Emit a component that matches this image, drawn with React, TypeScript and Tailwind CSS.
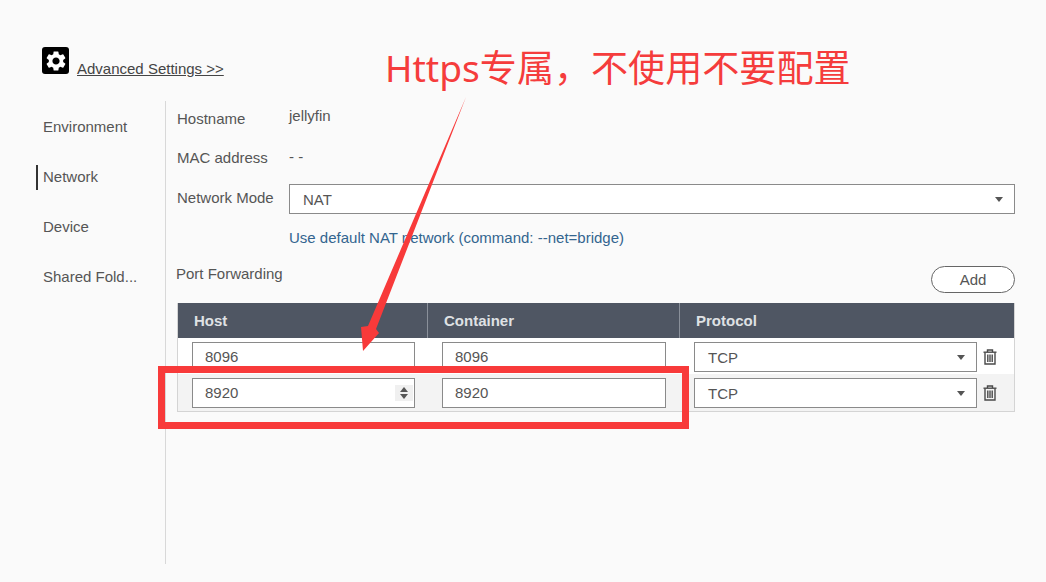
import React from 'react';
import { MdSettings } from 'react-icons/md';

const fontStack = "font-['Liberation_Sans',Arial,sans-serif]";

const Trash = () => (
    <svg width="14" height="16" viewBox="0 0 14 16" fill="none" stroke="#4a4a4a" strokeWidth="1.4" className="shrink-0">
        <path d="M0.5 3.2H13.5" />
        <path d="M4.5 3V1H9.5V3" />
        <path d="M2 3.5V15H12V3.5" />
        <path d="M4.8 5.5V13M7 5.5V13M9.2 5.5V13" />
    </svg>
);

const Caret = () => (
    <svg width="8" height="5" viewBox="0 0 8 5" className="shrink-0">
        <path d="M0 0H8L4 5Z" fill="#555" />
    </svg>
);

const SelectBox = ({ value, className }: { value: string; className: string }) => (
    <div className={`flex items-center justify-between bg-white border border-[#8a8a8a] pl-[13px] pr-[11px] text-[15px] text-[#555] ${className}`}>
        <span className="pt-[2px]">{value}</span>
        <Caret />
    </div>
);

const NumberBox = ({ value, width, spinner }: { value: string; width: string; spinner?: boolean }) => (
    <div className={`flex items-center justify-between h-[30px] bg-white border border-[#8a8a8a] pl-[12px] pr-px text-[15px] text-[#555] ${width}`}>
        <span>{value}</span>
        {spinner && (
            <div className="flex flex-col items-center justify-center gap-[2px] w-[18px] h-[16px] bg-[#f0f0f0]">
                <svg width="8" height="5" viewBox="0 0 8 5"><path d="M0 5H8L4 0Z" fill="#555" /></svg>
                <svg width="8" height="5" viewBox="0 0 8 5"><path d="M0 0H8L4 5Z" fill="#555" /></svg>
            </div>
        )}
    </div>
);

const PortRow = ({ host, container, active }: { host: string; container: string; active?: boolean }) => (
    <div className={`flex items-start pt-[4px] ${active ? 'h-[37px] bg-[#f3f3f3]' : 'h-[36px] bg-white'}`}>
        <div className="w-[250px] pl-[14px]">
            <NumberBox value={host} width="w-[223px]" spinner={active} />
        </div>
        <div className="w-[252px] pl-[14px]">
            <NumberBox value={container} width="w-[224px]" />
        </div>
        <div className="flex items-center flex-1 pl-[14px] gap-[6px]">
            <SelectBox value="TCP" className="w-[283px] h-[30px]" />
            <Trash />
        </div>
    </div>
);

const InfoRow = ({ label, children, className, labelClass = '' }: { label: string; children: React.ReactNode; className: string; labelClass?: string }) => (
    <div className={`flex ${className}`}>
        <div className={`w-[112px] shrink-0 text-[15px] text-[#555] ${labelClass}`}>{label}</div>
        {children}
    </div>
);

export default function App() {
    const nav = ['Environment', 'Network', 'Device', 'Shared Fold...'];
    return (
        <div className={`relative w-[1046px] h-[582px] overflow-hidden bg-[#fafafa] ${fontStack}`}>
            <div className="flex items-start h-[101px] pt-[47px] pl-[42px]">
                <div className="flex items-center justify-center w-[27px] h-[27px] rounded-[3px] bg-black">
                    <MdSettings size={24} color="#fff" />
                </div>
                <a className="ml-[8px] mt-[13px] text-[15px] leading-[18px] text-[#444] underline">Advanced Settings &gt;&gt;</a>
            </div>

            <div className="flex h-[463px]">
                <nav className="w-[165px] shrink-0 pl-[36px] pt-[1px] text-[15px] text-[#555]">
                    {nav.map((item, i) => (
                        <div key={item} className="flex items-center h-[50px] pt-[1px]">
                            <div className={`w-[2px] h-[25px] mr-[5px] ${i === 1 ? 'bg-[#333]' : ''}`} />
                            {item}
                        </div>
                    ))}
                </nav>

                <main className="flex-1 border-l border-[#d8d8d8] pl-[11px] pr-[31px]">
                    <InfoRow label="Hostname" className="h-[40px] pt-[9px] leading-[18px]">
                        <span className="-mt-[3px] text-[15px] text-[#555]">jellyfin</span>
                    </InfoRow>
                    <InfoRow label="MAC address" className="h-[40px] pt-[8px] leading-[18px]">
                        <span className="-mt-px text-[15px] text-[#555]">- -</span>
                    </InfoRow>
                    <InfoRow label="Network Mode" className="h-[34px] pt-[3px] leading-[30px]" labelClass="-mt-[1px]">
                        <SelectBox value="NAT" className="flex-1 h-[30px]" />
                    </InfoRow>
                    <div className="pl-[112px] mt-[14px] text-[15px] leading-[18px] text-[#33658f]">
                        Use default NAT network (command: --net=bridge)
                    </div>
                    <div className="flex items-start justify-between mt-[10px] -ml-px">
                        <span className="mt-[8px] text-[15px] leading-[18px] text-[#555]">Port Forwarding</span>
                        <button className="w-[84px] h-[27px] mt-[9px] pt-px rounded-full border border-[#666] text-[15px] text-[#555] bg-white">Add</button>
                    </div>

                    <div className="mt-[10px] border border-t-0 border-[#d4d4d4]">
                        <div className="flex h-[35px] bg-[#4f5663] text-[15px] font-bold text-[#dfe1e4] leading-[35px]">
                            <div className="w-[250px] pl-[16px] border-r border-[#8a909a]">Host</div>
                            <div className="w-[252px] pl-[16px] border-r border-[#8a909a]">Container</div>
                            <div className="flex-1 pl-[16px]">Protocol</div>
                        </div>
                        <PortRow host="8096" container="8096" />
                        <PortRow host="8920" container="8920" active />
                    </div>
                </main>
            </div>

            {/* red annotation drawn on top of the screenshot */}
            <div className="absolute left-[385px] top-[41px] text-[37.1px] leading-[54px] whitespace-nowrap text-[#f53c3c] font-['Noto_Sans','Noto_Sans_CJK_SC',sans-serif]">
                Https专属，不使用不要配置
            </div>
            <div className="absolute left-[158px] top-[366px] w-[531px] h-[63px] border-[7px] border-[#f83a3a]" />
            <svg className="absolute left-0 top-0" width="1046" height="582" viewBox="0 0 1046 582">
                <path d="M466 97L376 329L379 333L363 351L361 327L368 326Z" fill="#f83a3a" />
            </svg>
        </div>
    );
}
